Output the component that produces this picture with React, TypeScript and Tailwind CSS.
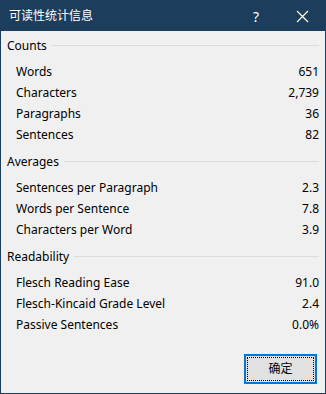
const sections = [
  {
    title: 'Counts',
    rows: [
      ['Words', '651'],
      ['Characters', '2,739'],
      ['Paragraphs', '36'],
      ['Sentences', '82'],
    ],
  },
  {
    title: 'Averages',
    rows: [
      ['Sentences per Paragraph', '2.3'],
      ['Words per Sentence', '7.8'],
      ['Characters per Word', '3.9'],
    ],
  },
  {
    title: 'Readability',
    rows: [
      ['Flesch Reading Ease', '91.0'],
      ['Flesch-Kincaid Grade Level', '2.4'],
      ['Passive Sentences', '0.0%'],
    ],
  },
]

const App = () => {
  return (
    <div
      className="w-[326px] h-[394px] flex flex-col bg-[#f0f0f0] border border-[#1c3e5c] text-[12px] text-black"
      style={{ fontFamily: '"Noto Sans", "Noto Sans CJK SC", sans-serif' }}
    >
      <div className="h-[30px] flex items-center bg-[#1c3e5c] text-white shrink-0">
        <span className="pl-[8px] flex-1">可读性统计信息</span>
        <span className="w-[46px] text-center text-[14px]">?</span>
        <span className="w-[46px] flex justify-center">
          <svg width="13" height="13" viewBox="0 0 13 13" stroke="white" strokeWidth="1.2">
            <path d="M1 1L12 12M12 1L1 12" />
          </svg>
        </span>
      </div>

      <div className="flex-1 flex flex-col pt-[4px] px-[6px]">
        {sections.map((s, i) => (
          <div key={s.title} className={i > 0 ? 'mt-[6px]' : ''}>
            <div className="h-[21px] flex items-center gap-[5px] mb-[5px]">
              <span>{s.title}</span>
              <div className="flex-1 h-px bg-[#dcdcdc]" />
            </div>
            {s.rows.map(([label, value]) => (
              <div key={label} className="h-[21px] flex items-center justify-between pl-[9px]">
                <span>{label}</span>
                <span>{value}</span>
              </div>
            ))}
          </div>
        ))}

        <div className="flex-1 flex items-end justify-end pb-[9px] pr-[2px]">
          <button className="w-[73px] h-[30px] border-2 border-[#0078d7] bg-[#e1e1e1] p-[1px]">
            <div className="w-full h-full border border-dotted border-black flex items-center justify-center">
              确定
            </div>
          </button>
        </div>
      </div>
    </div>
  )
}

export default App
